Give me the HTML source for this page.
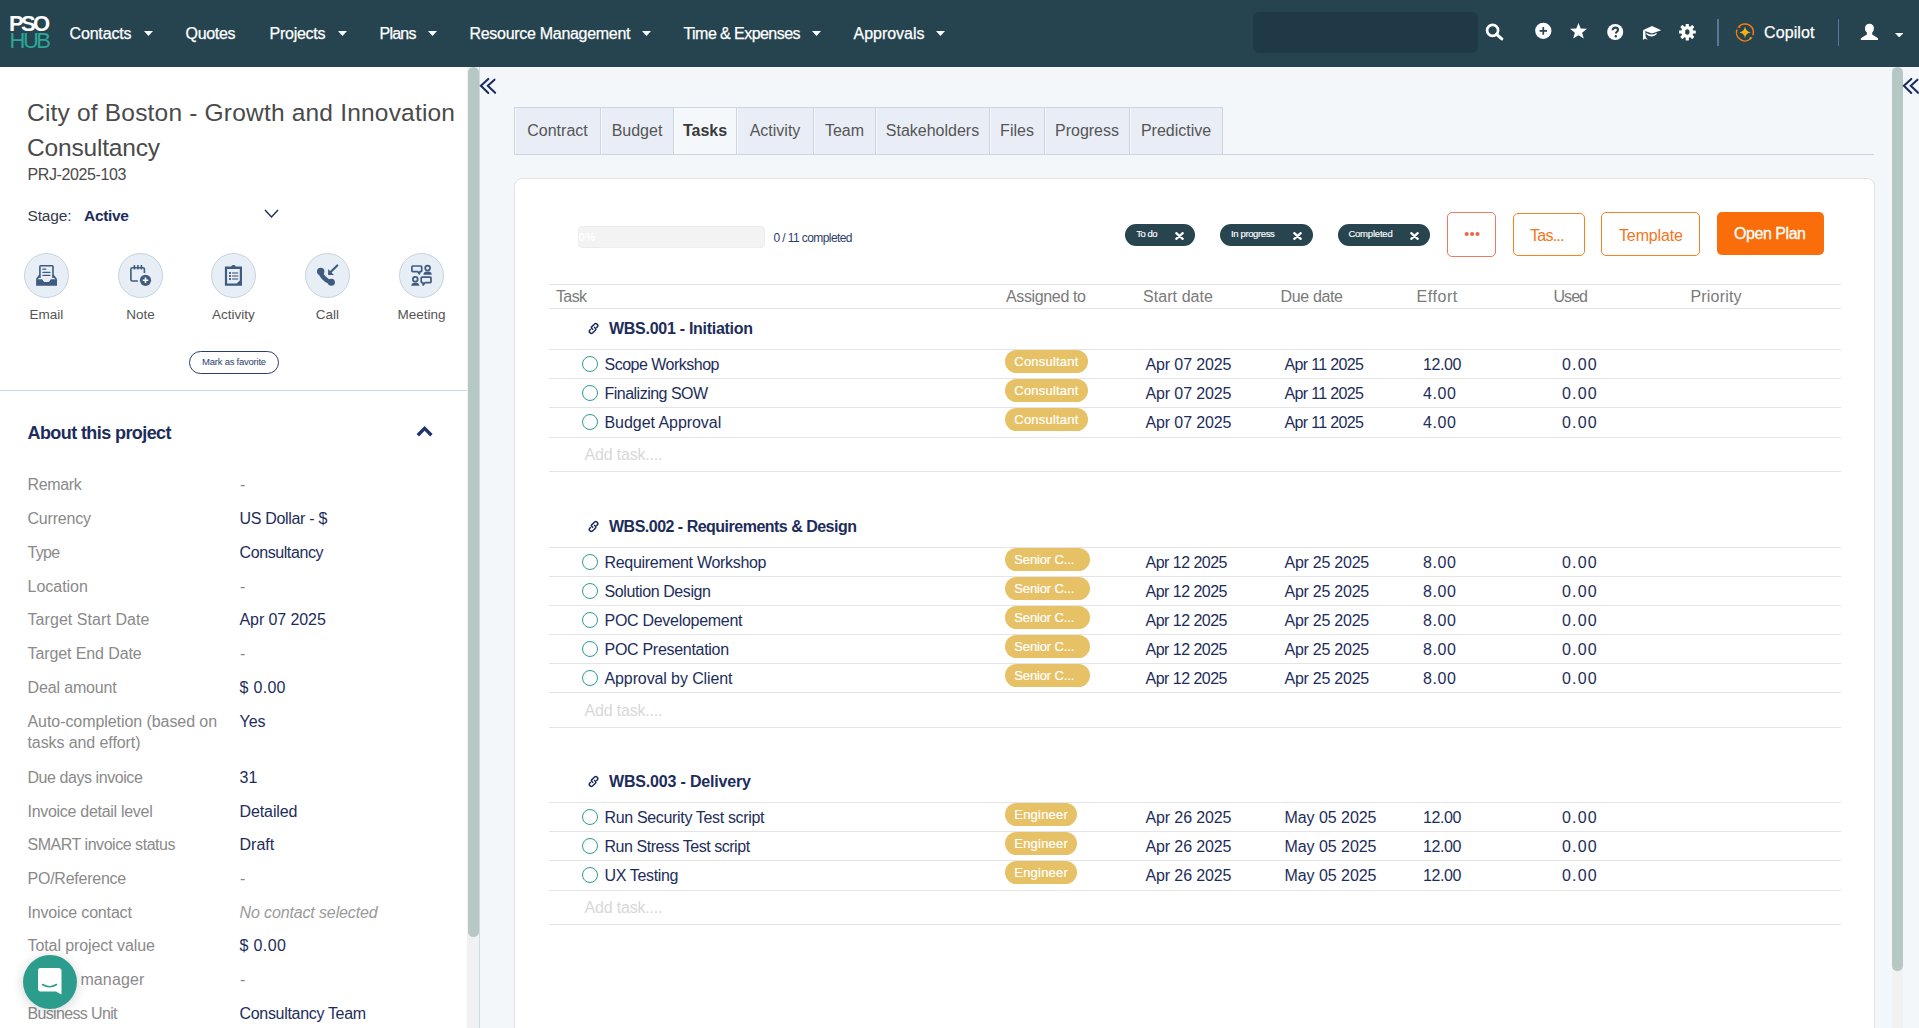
<!DOCTYPE html>
<html><head><meta charset="utf-8"><title>PSO Hub - Project</title>
<style>
html,body{margin:0;padding:0;width:1919px;height:1028px;overflow:hidden;background:#ffffff;font-family:"Liberation Sans", sans-serif;}
.t{position:absolute;white-space:pre;line-height:1;}
.r{position:absolute;box-sizing:border-box;display:block;}
</style></head><body>
<div class="r" style="left:0px;top:0px;width:1919px;height:67px;background:#264450;"></div>
<div class="t" style="left:9.00px;top:13.18px;font-size:22px;color:#fff;font-weight:700;letter-spacing:-2.734px;">PSO</div>
<div class="t" style="left:9.50px;top:29.88px;font-size:22px;color:#2aa797;letter-spacing:-2.477px;">HUB</div>
<div class="t" style="left:69.50px;top:25.96px;font-size:16px;color:#fff;letter-spacing:-0.163px;-webkit-text-stroke:0.25px #fff;">Contacts</div>
<svg class="r" style="left:144px;top:31px;" width="9" height="5" viewBox="0 0 9 5"><path d="M0 0H9L4.5 5Z" fill="#fff"/></svg>
<div class="t" style="left:185.50px;top:25.96px;font-size:16px;color:#fff;letter-spacing:-0.319px;-webkit-text-stroke:0.25px #fff;">Quotes</div>
<div class="t" style="left:269.50px;top:25.96px;font-size:16px;color:#fff;letter-spacing:-0.257px;-webkit-text-stroke:0.25px #fff;">Projects</div>
<svg class="r" style="left:337.5px;top:31px;" width="9" height="5" viewBox="0 0 9 5"><path d="M0 0H9L4.5 5Z" fill="#fff"/></svg>
<div class="t" style="left:379.50px;top:25.96px;font-size:16px;color:#fff;letter-spacing:-0.758px;-webkit-text-stroke:0.25px #fff;">Plans</div>
<svg class="r" style="left:428px;top:31px;" width="9" height="5" viewBox="0 0 9 5"><path d="M0 0H9L4.5 5Z" fill="#fff"/></svg>
<div class="t" style="left:469.50px;top:25.96px;font-size:16px;color:#fff;letter-spacing:-0.295px;-webkit-text-stroke:0.25px #fff;">Resource Management</div>
<svg class="r" style="left:641.5px;top:31px;" width="9" height="5" viewBox="0 0 9 5"><path d="M0 0H9L4.5 5Z" fill="#fff"/></svg>
<div class="t" style="left:683.50px;top:25.96px;font-size:16px;color:#fff;letter-spacing:-0.557px;-webkit-text-stroke:0.25px #fff;">Time &amp; Expenses</div>
<svg class="r" style="left:811.5px;top:31px;" width="9" height="5" viewBox="0 0 9 5"><path d="M0 0H9L4.5 5Z" fill="#fff"/></svg>
<div class="t" style="left:853.50px;top:25.96px;font-size:16px;color:#fff;letter-spacing:-0.02px;-webkit-text-stroke:0.25px #fff;">Approvals</div>
<svg class="r" style="left:935.5px;top:31px;" width="9" height="5" viewBox="0 0 9 5"><path d="M0 0H9L4.5 5Z" fill="#fff"/></svg>
<div class="r" style="left:1253px;top:12px;width:225px;height:41px;background:#1f3a46;border-radius:6px;"></div>
<svg class="r" style="left:1485px;top:23px;" width="20" height="18" viewBox="0 0 20 18"><circle cx="7.6" cy="7.4" r="5.5" fill="none" stroke="#fff" stroke-width="2.7"/><path d="M11.6 11.4L16.8 15.9" stroke="#fff" stroke-width="3" stroke-linecap="round"/></svg>
<svg class="r" style="left:1535px;top:22px;" width="17" height="18" viewBox="0 0 17 18"><circle cx="8.3" cy="8.8" r="8.1" fill="#fff"/><path d="M8.3 5.1V12.7M4.6 8.9H12" stroke="#264450" stroke-width="1.7"/></svg>
<svg class="r" style="left:1569px;top:23px;" width="19" height="16" viewBox="0 0 19 16"><path d="M9.5 0L11.7 5.5L18 5.8L13.1 9.7L14.8 15.6L9.5 12.2L4.2 15.6L5.9 9.7L1 5.8L7.3 5.5Z" fill="#fff"/></svg>
<svg class="r" style="left:1607px;top:24px;" width="17" height="16" viewBox="0 0 17 16"><circle cx="8.2" cy="8" r="8" fill="#fff"/><path d="M5.6 6.2C5.6 4.6 6.8 3.6 8.3 3.6C9.9 3.6 11 4.6 11 5.9C11 7.6 8.9 7.8 8.9 9.4" fill="none" stroke="#264450" stroke-width="2.1"/><circle cx="8.8" cy="12.2" r="1.2" fill="#264450"/></svg>
<svg class="r" style="left:1636px;top:18px;" width="30" height="28" viewBox="0 0 30 28"><path d="M6.8 12.2L16 7.9L25.2 12.3L16 15.6Z" fill="#fff"/><path d="M10.4 14.7Q16 18.4 20.6 14.7V16.3Q16 20.6 10.4 16.6Z" fill="#fff"/><path d="M7.1 12.3L9.4 13.6L9.6 18.4L11.6 21.9L9.1 20.5L6.9 22.1L7 18.4Z" fill="#fff"/></svg>
<svg class="r" style="left:1679px;top:24px;" width="17" height="17" viewBox="0 0 17 17"><g transform="translate(8.3 8)"><g fill="#fff"><rect x="-1.6" y="-8.5" width="3.2" height="4.5" rx="0.6" transform="rotate(0)"/><rect x="-1.6" y="-8.5" width="3.2" height="4.5" rx="0.6" transform="rotate(45)"/><rect x="-1.6" y="-8.5" width="3.2" height="4.5" rx="0.6" transform="rotate(90)"/><rect x="-1.6" y="-8.5" width="3.2" height="4.5" rx="0.6" transform="rotate(135)"/><rect x="-1.6" y="-8.5" width="3.2" height="4.5" rx="0.6" transform="rotate(180)"/><rect x="-1.6" y="-8.5" width="3.2" height="4.5" rx="0.6" transform="rotate(225)"/><rect x="-1.6" y="-8.5" width="3.2" height="4.5" rx="0.6" transform="rotate(270)"/><rect x="-1.6" y="-8.5" width="3.2" height="4.5" rx="0.6" transform="rotate(315)"/><circle r="6.1"/></g><ellipse rx="2.2" ry="2.8" fill="#264450"/></g></svg>
<div class="r" style="left:1717px;top:19px;width:2px;height:27px;background:#5b7699;"></div>
<div class="r" style="left:1838px;top:19px;width:1px;height:27px;background:#5b7699;"></div>
<svg class="r" style="left:1730px;top:18px;" width="30" height="28" viewBox="0 0 30 28"><defs><linearGradient id="cpg" x1="0" y1="0" x2="0" y2="1"><stop offset="0" stop-color="#fbc91c"/><stop offset="1" stop-color="#f49312"/></linearGradient></defs><g fill="none" stroke="#f57f10" stroke-width="1.5"><path d="M8.68 8.71A8.5 8.5 0 0 1 23.01 17.25"/><path d="M21.11 20.31A8.5 8.5 0 0 1 6.98 11.58"/></g><path d="M7 9.3L10.3 7.2L10.2 10Z" fill="#f57f10"/><path d="M22.8 19.8L19.5 21.7L19.8 19Z" fill="#f9a51a"/><path d="M15 8.6Q15.7 13.7 20.9 14.4Q15.7 15.1 15 20.2Q14.3 15.1 9.1 14.4Q14.3 13.7 15 8.6Z" fill="url(#cpg)"/></svg>
<div class="t" style="left:1764.00px;top:24.96px;font-size:16px;color:#fff;letter-spacing:0.115px;-webkit-text-stroke:0.25px #fff;">Copilot</div>
<svg class="r" style="left:1850px;top:16px;" width="30" height="28" viewBox="0 0 30 28"><rect x="15" y="7.7" width="8.9" height="9.6" rx="4.2" fill="#fff"/><path d="M16.9 15H22.2V18.4L28 22.3V24.1H10.8V22.3L16.9 18.4Z" fill="#fff"/></svg>
<svg class="r" style="left:1894.8px;top:33px;" width="8.4" height="4.4" viewBox="0 0 8.4 4.4"><path d="M0 0H8.4L4.2 4.4Z" fill="#fff"/></svg>
<div class="t" style="left:27.00px;top:100.56px;font-size:24.5px;color:#4a4a4a;letter-spacing:0.194px;">City of Boston - Growth and Innovation</div>
<div class="t" style="left:27.00px;top:135.56px;font-size:24.5px;color:#4a4a4a;letter-spacing:-0.183px;">Consultancy</div>
<div class="t" style="left:27.50px;top:167.36px;font-size:16px;color:#4a4a4a;letter-spacing:-0.379px;">PRJ-2025-103</div>
<div class="t" style="left:27.50px;top:207.88px;font-size:15.5px;color:#333a4a;letter-spacing:-0.163px;">Stage:</div>
<div class="t" style="left:84.00px;top:207.88px;font-size:15.5px;color:#1d2d5b;font-weight:700;letter-spacing:-0.306px;">Active</div>
<svg class="r" style="left:264px;top:209px;" width="15" height="10" viewBox="0 0 15 10"><path d="M1 1L7.5 8L14 1" fill="none" stroke="#1d2d5b" stroke-width="1.4"/></svg>
<div class="r" style="left:24.0px;top:253px;width:45px;height:45px;background:#e8eef6;border:1px solid #c5d3e0;border-radius:50%;"></div>
<div class="t" style="left:-453.50px;width:1000px;text-align:center;top:307.57px;font-size:13.5px;color:#555;">Email</div>
<div class="r" style="left:118.0px;top:253px;width:45px;height:45px;background:#e8eef6;border:1px solid #c5d3e0;border-radius:50%;"></div>
<div class="t" style="left:-359.50px;width:1000px;text-align:center;top:307.57px;font-size:13.5px;color:#555;">Note</div>
<div class="r" style="left:211.0px;top:253px;width:45px;height:45px;background:#e8eef6;border:1px solid #c5d3e0;border-radius:50%;"></div>
<div class="t" style="left:-266.50px;width:1000px;text-align:center;top:307.57px;font-size:13.5px;color:#555;">Activity</div>
<div class="r" style="left:305.0px;top:253px;width:45px;height:45px;background:#e8eef6;border:1px solid #c5d3e0;border-radius:50%;"></div>
<div class="t" style="left:-172.50px;width:1000px;text-align:center;top:307.57px;font-size:13.5px;color:#555;">Call</div>
<div class="r" style="left:399.0px;top:253px;width:45px;height:45px;background:#e8eef6;border:1px solid #c5d3e0;border-radius:50%;"></div>
<div class="t" style="left:-78.50px;width:1000px;text-align:center;top:307.57px;font-size:13.5px;color:#555;">Meeting</div>
<svg class="r" style="left:30px;top:258px;" width="34" height="34" viewBox="0 0 34 34"><path d="M9.9 20V8.6Q9.9 7.7 10.8 7.7H22.1Q23 7.7 23 8.6V20" fill="#e8eef6" stroke="#3f5b80" stroke-width="1.6"/><path d="M12.9 11.2H15.8M12.9 14.4H20M12.9 17.4H20" stroke="#3f5b80" stroke-width="1.2" stroke-linecap="round"/><path d="M9.9 17L6.6 21.4M23 17L26.4 21.4" stroke="#3f5b80" stroke-width="1.6"/><path d="M6.1 21.2H11.6Q12.4 21.2 12.8 22L13.3 23.1Q13.7 23.9 14.5 23.9H18.5Q19.3 23.9 19.7 23.1L20.2 22Q20.6 21.2 21.4 21.2H27V27.8H6.1Z" fill="#3f5b80"/></svg>
<svg class="r" style="left:124px;top:258px;" width="34" height="34" viewBox="0 0 34 34"><path d="M13.9 23H8.4Q6.9 23 6.9 21.5V11.3Q6.9 9.8 8.4 9.8H18.9Q20.4 9.8 20.4 11.3V14.9" fill="none" stroke="#3f5b80" stroke-width="1.6"/><path d="M10.4 7.1V11.6M13.9 7.1V11.6M17.4 7.1V11.6" stroke="#3f5b80" stroke-width="1.6"/><circle cx="21.5" cy="22.3" r="5.6" fill="#3f5b80"/><path d="M21.5 19.5V25.1M18.7 22.3H24.3" stroke="#fff" stroke-width="1.6"/></svg>
<svg class="r" style="left:217px;top:258px;" width="34" height="34" viewBox="0 0 34 34"><path d="M7.9 8.4H14.2Q14.8 7.1 16.5 7.1Q18.2 7.1 18.8 8.4H25V27.8H7.9Z" fill="#3f5b80"/><path d="M10.1 10.9H22.8V22.6L19.7 25.5H10.1Z" fill="#e8eef6"/><path d="M12.1 14.1H13.9V15.9H12.1ZM12.1 17.1H13.9V18.9H12.1ZM12.1 20.1H13.9V21.9H12.1Z" fill="#3f5b80"/><path d="M15.6 15H20.6M15.6 18H20.8M15.6 21H20.6" stroke="#3f5b80" stroke-opacity="0.75" stroke-width="1.5" stroke-linecap="round"/></svg>
<svg class="r" style="left:310px;top:258px;" width="34" height="34" viewBox="0 0 34 34"><path d="M10.3 13.6Q12 20.5 20.8 24.6" fill="none" stroke="#3f5b80" stroke-width="4.4"/><circle cx="10.7" cy="13.4" r="3.7" fill="#3f5b80"/><circle cx="21.4" cy="24.3" r="3.5" fill="#3f5b80"/><path d="M27.3 7.4L20.6 14.1" stroke="#3f5b80" stroke-width="2.1" stroke-linecap="round"/><path d="M18.1 11V16.9H24Z" fill="#3f5b80"/></svg>
<svg class="r" style="left:404px;top:258px;" width="34" height="34" viewBox="0 0 34 34"><path d="M8.8 8H16.8Q17.7 8 17.7 8.9V12.7Q17.7 13.6 16.8 13.6H15.8L15.4 15.9L13.6 13.6H8.8Q7.9 13.6 7.9 12.7V8.9Q7.9 8 8.8 8Z" fill="none" stroke="#3f5b80" stroke-width="1.7" stroke-linejoin="round"/><circle cx="23.6" cy="10.1" r="2.4" fill="none" stroke="#3f5b80" stroke-width="1.7"/><path d="M19.3 16.7Q19.6 13.9 22 13.6H25.2Q27.6 13.9 27.9 16.7Z" fill="#3f5b80"/><circle cx="11.3" cy="21.3" r="2.4" fill="none" stroke="#3f5b80" stroke-width="1.7"/><path d="M7.1 27.8Q7.4 25 9.8 24.7H12.8Q15.2 25 15.5 27.8Z" fill="#3f5b80"/><path d="M18.1 19.1H26.1Q27 19.1 27 20V23.8Q27 24.7 26.1 24.7H21L19.2 27L18.9 24.7H18.1Q17.2 24.7 17.2 23.8V20Q17.2 19.1 18.1 19.1Z" fill="none" stroke="#3f5b80" stroke-width="1.7" stroke-linejoin="round"/></svg>
<div class="r" style="left:189px;top:351px;width:90px;height:23px;background:#fff;border:1.3px solid #2b3d6e;border-radius:12px;"></div>
<div class="t" style="left:-266.00px;width:1000px;text-align:center;top:357.46px;font-size:9.5px;color:#2b3d6e;letter-spacing:-0.239px;padding-left:-0.239px;">Mark as favorite</div>
<div class="r" style="left:0px;top:390px;width:467px;height:1px;background:#cdd7e0;"></div>
<div class="t" style="left:27.50px;top:423.96px;font-size:18px;color:#1d2d5b;font-weight:700;letter-spacing:-0.588px;">About this project</div>
<svg class="r" style="left:405px;top:415px;" width="40" height="35" viewBox="0 0 40 35"><path d="M11.6 18.9L19.6 10.9L27.6 18.9L25.2 21.4L19.6 15.8L14 21.4Z" fill="#23346a"/></svg>
<div class="t" style="left:27.50px;top:477.06px;font-size:16px;color:#8a8a8a;letter-spacing:-0.363px;">Remark</div>
<div class="t" style="left:240.00px;top:477.06px;font-size:16px;color:#8a8a8a;">-</div>
<div class="t" style="left:27.50px;top:511.06px;font-size:16px;color:#8a8a8a;letter-spacing:-0.201px;">Currency</div>
<div class="t" style="left:239.50px;top:511.06px;font-size:16px;color:#1d2d5b;letter-spacing:-0.315px;">US Dollar - $</div>
<div class="t" style="left:27.50px;top:545.06px;font-size:16px;color:#8a8a8a;letter-spacing:-0.662px;">Type</div>
<div class="t" style="left:239.50px;top:545.06px;font-size:16px;color:#1d2d5b;letter-spacing:-0.405px;">Consultancy</div>
<div class="t" style="left:27.50px;top:578.76px;font-size:16px;color:#8a8a8a;letter-spacing:-0.014px;">Location</div>
<div class="t" style="left:240.00px;top:578.76px;font-size:16px;color:#8a8a8a;">-</div>
<div class="t" style="left:27.50px;top:611.96px;font-size:16px;color:#8a8a8a;letter-spacing:0.065px;">Target Start Date</div>
<div class="t" style="left:239.50px;top:611.96px;font-size:16px;color:#1d2d5b;letter-spacing:-0.089px;">Apr 07 2025</div>
<div class="t" style="left:27.50px;top:645.76px;font-size:16px;color:#8a8a8a;letter-spacing:-0.102px;">Target End Date</div>
<div class="t" style="left:240.00px;top:645.76px;font-size:16px;color:#8a8a8a;">-</div>
<div class="t" style="left:27.50px;top:679.56px;font-size:16px;color:#8a8a8a;letter-spacing:-0.142px;">Deal amount</div>
<div class="t" style="left:239.50px;top:679.56px;font-size:16px;color:#1d2d5b;letter-spacing:0.303px;">$ 0.00</div>
<div class="t" style="left:27.50px;top:713.76px;font-size:16px;color:#8a8a8a;letter-spacing:-0.068px;">Auto-completion (based on</div>
<div class="t" style="left:239.50px;top:713.76px;font-size:16px;color:#1d2d5b;">Yes</div>
<div class="t" style="left:27.50px;top:735.36px;font-size:16px;color:#8a8a8a;letter-spacing:-0.09px;">tasks and effort)</div>
<div class="t" style="left:27.50px;top:770.36px;font-size:16px;color:#8a8a8a;letter-spacing:-0.436px;">Due days invoice</div>
<div class="t" style="left:239.50px;top:770.36px;font-size:16px;color:#1d2d5b;">31</div>
<div class="t" style="left:27.50px;top:803.56px;font-size:16px;color:#8a8a8a;letter-spacing:-0.292px;">Invoice detail level</div>
<div class="t" style="left:239.50px;top:803.56px;font-size:16px;color:#1d2d5b;letter-spacing:-0.1px;">Detailed</div>
<div class="t" style="left:27.50px;top:837.16px;font-size:16px;color:#8a8a8a;letter-spacing:-0.464px;">SMART invoice status</div>
<div class="t" style="left:239.50px;top:837.16px;font-size:16px;color:#1d2d5b;">Draft</div>
<div class="t" style="left:27.50px;top:870.96px;font-size:16px;color:#8a8a8a;letter-spacing:-0.245px;">PO/Reference</div>
<div class="t" style="left:240.00px;top:870.96px;font-size:16px;color:#8a8a8a;">-</div>
<div class="t" style="left:27.50px;top:904.96px;font-size:16px;color:#8a8a8a;letter-spacing:-0.167px;">Invoice contact</div>
<div class="t" style="left:239.50px;top:904.96px;font-size:16px;color:#9a9a9a;letter-spacing:-0.13px;font-style:italic;">No contact selected</div>
<div class="t" style="left:27.50px;top:938.36px;font-size:16px;color:#8a8a8a;letter-spacing:-0.087px;">Total project value</div>
<div class="t" style="left:239.50px;top:938.36px;font-size:16px;color:#1d2d5b;letter-spacing:0.363px;">$ 0.00</div>
<div class="t" style="left:80.40px;top:971.96px;font-size:16px;color:#8a8a8a;letter-spacing:0.124px;">manager</div>
<div class="t" style="left:240.00px;top:971.96px;font-size:16px;color:#8a8a8a;">-</div>
<div class="t" style="left:27.50px;top:1005.76px;font-size:16px;color:#8a8a8a;letter-spacing:-0.652px;">Business Unit</div>
<div class="t" style="left:239.50px;top:1005.76px;font-size:16px;color:#1d2d5b;letter-spacing:-0.315px;">Consultancy Team</div>
<div class="r" style="left:23px;top:955px;width:54px;height:54px;background:#2c9c8c;border-radius:50%;box-shadow:0 2px 12px rgba(0,0,0,0.18);"></div>
<svg class="r" style="left:37px;top:967px;" width="26" height="29" viewBox="0 0 26 29"><path d="M3 1H21.5C23 1 24.5 2 24.5 3.5V27.5L19 24.5H3.5C2 24.5 1 23.5 1 22V3.5C1 2 2 1 3 1Z" fill="#fff"/><path d="M5.5 17.5Q12.5 22 19.5 17.5" fill="none" stroke="#2c9c8c" stroke-width="1.6" stroke-linecap="round"/></svg>
<div class="r" style="left:467px;top:67px;width:12px;height:961px;background:#f1f1f1;"></div>
<div class="r" style="left:468px;top:67px;width:11px;height:870px;background:#b6c8c4;border-radius:5.5px;"></div>
<div class="r" style="left:479px;top:67px;width:1px;height:961px;background:#d0dbe5;"></div>
<div class="r" style="left:480px;top:67px;width:1412px;height:961px;background:#f3f7fa;"></div>
<div class="r" style="left:1903px;top:67px;width:16px;height:961px;background:#f3f7fa;"></div>
<svg class="r" style="left:476px;top:72px;" width="26" height="28" viewBox="0 0 26 28"><path d="M12.3 6.9L4.9 13.8L12.3 20.9M18.5 7.7L11.8 13.8L19.1 20.8" fill="none" stroke="#1e2c62" stroke-width="2.1" stroke-linecap="round"/></svg>
<div class="r" style="left:1892px;top:67px;width:11px;height:961px;background:#f1f1f1;"></div>
<div class="r" style="left:1892px;top:67px;width:11px;height:904px;background:#b6c8c4;border-radius:5.5px;"></div>
<div class="r" style="left:514px;top:154px;width:1360px;height:1px;background:#c9d5e3;"></div>
<div class="r" style="left:514px;top:107px;width:87px;height:48px;background:#e9eef6;border:1px solid #cad6e2;box-shadow:inset 1px 0 0 rgba(255,255,255,0.6);"></div>
<div class="t" style="left:57.50px;width:1000px;text-align:center;top:123.16px;font-size:16px;color:#555;">Contract</div>
<div class="r" style="left:600px;top:107px;width:74px;height:48px;background:#e9eef6;border:1px solid #cad6e2;box-shadow:inset 1px 0 0 rgba(255,255,255,0.6);"></div>
<div class="t" style="left:137.00px;width:1000px;text-align:center;top:123.16px;font-size:16px;color:#555;">Budget</div>
<div class="r" style="left:673px;top:107px;width:64px;height:48px;background:#f4f8fb;border:1px solid #cad6e2;box-shadow:inset 1px 0 0 rgba(255,255,255,0.6);"></div>
<div class="t" style="left:205.00px;width:1000px;text-align:center;top:123.16px;font-size:16px;color:#3a3a3a;font-weight:700;">Tasks</div>
<div class="r" style="left:736px;top:107px;width:78px;height:48px;background:#e9eef6;border:1px solid #cad6e2;box-shadow:inset 1px 0 0 rgba(255,255,255,0.6);"></div>
<div class="t" style="left:275.00px;width:1000px;text-align:center;top:123.16px;font-size:16px;color:#555;">Activity</div>
<div class="r" style="left:813px;top:107px;width:63px;height:48px;background:#e9eef6;border:1px solid #cad6e2;box-shadow:inset 1px 0 0 rgba(255,255,255,0.6);"></div>
<div class="t" style="left:344.50px;width:1000px;text-align:center;top:123.16px;font-size:16px;color:#555;">Team</div>
<div class="r" style="left:875px;top:107px;width:115px;height:48px;background:#e9eef6;border:1px solid #cad6e2;box-shadow:inset 1px 0 0 rgba(255,255,255,0.6);"></div>
<div class="t" style="left:432.50px;width:1000px;text-align:center;top:123.16px;font-size:16px;color:#555;">Stakeholders</div>
<div class="r" style="left:989px;top:107px;width:56px;height:48px;background:#e9eef6;border:1px solid #cad6e2;box-shadow:inset 1px 0 0 rgba(255,255,255,0.6);"></div>
<div class="t" style="left:517.00px;width:1000px;text-align:center;top:123.16px;font-size:16px;color:#555;">Files</div>
<div class="r" style="left:1044px;top:107px;width:86px;height:48px;background:#e9eef6;border:1px solid #cad6e2;box-shadow:inset 1px 0 0 rgba(255,255,255,0.6);"></div>
<div class="t" style="left:587.00px;width:1000px;text-align:center;top:123.16px;font-size:16px;color:#555;">Progress</div>
<div class="r" style="left:1129px;top:107px;width:94px;height:48px;background:#e9eef6;border:1px solid #cad6e2;box-shadow:inset 1px 0 0 rgba(255,255,255,0.6);"></div>
<div class="t" style="left:676.00px;width:1000px;text-align:center;top:123.16px;font-size:16px;color:#555;">Predictive</div>
<div class="r" style="left:514px;top:178px;width:1361px;height:900px;background:#fff;border:1px solid #e3e3e3;border-radius:8px;"></div>
<svg class="r" style="left:1898.7px;top:72px;overflow:visible;" width="26" height="28" viewBox="0 0 26 28"><path d="M12.3 6.9L4.9 13.8L12.3 20.9M18.5 7.7L11.8 13.8L19.1 20.8" fill="none" stroke="#1e2c62" stroke-width="2.1" stroke-linecap="round"/></svg>
<div class="r" style="left:578px;top:226px;width:187px;height:22px;background:#f3f3f3;border:1px solid #ececec;border-radius:4px;"></div>
<div class="t" style="left:578.50px;top:232.07px;font-size:11.5px;color:#fff;font-weight:700;">0%</div>
<div class="t" style="left:773.50px;top:232.34px;font-size:12px;color:#2d3d6a;letter-spacing:-0.59px;">0 / 11 completed</div>
<div class="r" style="left:1125px;top:224px;width:70px;height:22px;background:#27444f;border-radius:11px;"></div>
<div class="t" style="left:1136.30px;top:229.26px;font-size:9.5px;color:#fff;letter-spacing:-0.512px;-webkit-text-stroke:0.15px #fff;">To do</div>
<svg class="r" style="left:1174.7px;top:232px;" width="9" height="8" viewBox="0 0 9 8"><path d="M1.3 1.2L7.7 6.8M7.7 1.2L1.3 6.8" stroke="#fff" stroke-width="2.3" stroke-linecap="round"/></svg>
<div class="r" style="left:1220px;top:224px;width:93px;height:22px;background:#27444f;border-radius:11px;"></div>
<div class="t" style="left:1231.10px;top:229.26px;font-size:9.5px;color:#fff;letter-spacing:-0.383px;-webkit-text-stroke:0.15px #fff;">In progress</div>
<svg class="r" style="left:1292.5px;top:232px;" width="9" height="8" viewBox="0 0 9 8"><path d="M1.3 1.2L7.7 6.8M7.7 1.2L1.3 6.8" stroke="#fff" stroke-width="2.3" stroke-linecap="round"/></svg>
<div class="r" style="left:1338px;top:224px;width:92px;height:22px;background:#27444f;border-radius:11px;"></div>
<div class="t" style="left:1348.40px;top:229.26px;font-size:9.5px;color:#fff;letter-spacing:-0.207px;-webkit-text-stroke:0.15px #fff;">Completed</div>
<svg class="r" style="left:1409.8px;top:232px;" width="9" height="8" viewBox="0 0 9 8"><path d="M1.3 1.2L7.7 6.8M7.7 1.2L1.3 6.8" stroke="#fff" stroke-width="2.3" stroke-linecap="round"/></svg>
<div class="r" style="left:1447px;top:212px;width:49px;height:45px;background:#fff;border:1.3px solid #ea7a62;border-radius:5px;"></div>
<svg class="r" style="left:1464px;top:231px;" width="17" height="6" viewBox="0 0 17 6"><circle cx="2.7" cy="3" r="2.1" fill="#e5684f"/><circle cx="8.1" cy="3" r="2.1" fill="#e5684f"/><circle cx="13.5" cy="3" r="2.1" fill="#e5684f"/></svg>
<div class="r" style="left:1513px;top:213px;width:72px;height:43px;background:#fff;border:1.3px solid #f7801f;border-radius:5px;"></div>
<div class="t" style="left:1530.00px;top:227.76px;font-size:16px;color:#f47420;letter-spacing:-0.747px;">Tas...</div>
<div class="r" style="left:1601px;top:212px;width:99px;height:44px;background:#fff;border:1.3px solid #f7801f;border-radius:5px;"></div>
<div class="t" style="left:1619.00px;top:227.76px;font-size:16px;color:#f47420;letter-spacing:-0.132px;">Template</div>
<div class="r" style="left:1717px;top:212px;width:107px;height:43px;background:#f96d0a;border-radius:5px;"></div>
<div class="t" style="left:1734.00px;top:225.96px;font-size:16px;color:#fff;letter-spacing:-0.451px;-webkit-text-stroke:0.3px #fff;">Open Plan</div>
<div class="r" style="left:549px;top:284px;width:1292px;height:1px;background:#e4e4e4;"></div>
<div class="r" style="left:549px;top:308px;width:1292px;height:1px;background:#e4e4e4;"></div>
<div class="t" style="left:556.00px;top:288.76px;font-size:16px;color:#7a7a7a;letter-spacing:-0.635px;">Task</div>
<div class="t" style="left:1006.00px;top:288.76px;font-size:16px;color:#7a7a7a;letter-spacing:-0.361px;">Assigned to</div>
<div class="t" style="left:1143.00px;top:288.76px;font-size:16px;color:#7a7a7a;letter-spacing:0.069px;">Start date</div>
<div class="t" style="left:1280.50px;top:288.76px;font-size:16px;color:#7a7a7a;letter-spacing:-0.348px;">Due date</div>
<div class="t" style="left:1416.50px;top:288.76px;font-size:16px;color:#7a7a7a;letter-spacing:0.569px;">Effort</div>
<div class="t" style="left:1553.50px;top:288.76px;font-size:16px;color:#7a7a7a;letter-spacing:-0.953px;">Used</div>
<div class="t" style="left:1690.50px;top:288.76px;font-size:16px;color:#7a7a7a;letter-spacing:0.174px;">Priority</div>
<svg class="r" style="left:582px;top:316px;" width="30" height="24" viewBox="0 0 30 24"><g transform="translate(11.55 12.5) rotate(-45)" fill="none" stroke="#1d2d5b" stroke-width="1.5"><path d="M2.4 1.5H3.6A2 2 0 0 0 3.6 -2.5H-0.2Q-1.2 -2.5 -1.2 -1.5V0.6"/><path d="M-2.4 -1.5H-3.6A2 2 0 0 0 -3.6 2.5H0.4Q1.4 2.5 1.4 1.5V-0.6"/></g></svg>
<div class="t" style="left:609.00px;top:321.16px;font-size:16px;color:#1d2d5b;font-weight:700;letter-spacing:-0.281px;">WBS.001 - Initiation</div>
<div class="r" style="left:549px;top:349px;width:1292px;height:1px;background:#e4e4e4;"></div>
<div class="r" style="left:549px;top:378px;width:1292px;height:1px;background:#e4e4e4;"></div>
<div class="r" style="left:549px;top:407px;width:1292px;height:1px;background:#e4e4e4;"></div>
<div class="r" style="left:549px;top:437px;width:1292px;height:1px;background:#e4e4e4;"></div>
<div class="r" style="left:549px;top:471px;width:1292px;height:1px;background:#e4e4e4;"></div>
<div class="r" style="left:582px;top:356px;width:16px;height:16px;background:transparent;border:1.5px solid #2a9d8f;border-radius:50%;"></div>
<div class="t" style="left:604.50px;top:356.76px;font-size:16px;color:#1d2d5b;letter-spacing:-0.504px;">Scope Workshop</div>
<div class="r" style="left:1005px;top:350px;width:83px;height:23px;background:#e6c166;border-radius:11.5px;"></div>
<div class="t" style="left:1014.30px;top:354.50px;font-size:13px;color:#fff;letter-spacing:0.205px;-webkit-text-stroke:0.2px #fff;">Consultant</div>
<div class="t" style="left:1145.50px;top:356.76px;font-size:16px;color:#1d2d5b;letter-spacing:-0.119px;">Apr 07 2025</div>
<div class="t" style="left:1284.50px;top:356.76px;font-size:16px;color:#1d2d5b;letter-spacing:-0.67px;">Apr 11 2025</div>
<div class="t" style="left:1423.00px;top:356.76px;font-size:16px;color:#1d2d5b;letter-spacing:-0.387px;">12.00</div>
<div class="t" style="left:1562.00px;top:356.76px;font-size:16px;color:#1d2d5b;letter-spacing:1.153px;">0.00</div>
<div class="r" style="left:582px;top:385px;width:16px;height:16px;background:transparent;border:1.5px solid #2a9d8f;border-radius:50%;"></div>
<div class="t" style="left:604.50px;top:385.76px;font-size:16px;color:#1d2d5b;letter-spacing:-0.512px;">Finalizing SOW</div>
<div class="r" style="left:1005px;top:379px;width:83px;height:23px;background:#e6c166;border-radius:11.5px;"></div>
<div class="t" style="left:1014.30px;top:383.50px;font-size:13px;color:#fff;letter-spacing:0.205px;-webkit-text-stroke:0.2px #fff;">Consultant</div>
<div class="t" style="left:1145.50px;top:385.76px;font-size:16px;color:#1d2d5b;letter-spacing:-0.119px;">Apr 07 2025</div>
<div class="t" style="left:1284.50px;top:385.76px;font-size:16px;color:#1d2d5b;letter-spacing:-0.67px;">Apr 11 2025</div>
<div class="t" style="left:1423.00px;top:385.76px;font-size:16px;color:#1d2d5b;letter-spacing:0.62px;">4.00</div>
<div class="t" style="left:1562.00px;top:385.76px;font-size:16px;color:#1d2d5b;letter-spacing:1.153px;">0.00</div>
<div class="r" style="left:582px;top:414px;width:16px;height:16px;background:transparent;border:1.5px solid #2a9d8f;border-radius:50%;"></div>
<div class="t" style="left:604.50px;top:414.76px;font-size:16px;color:#1d2d5b;letter-spacing:-0.052px;">Budget Approval</div>
<div class="r" style="left:1005px;top:408px;width:83px;height:23px;background:#e6c166;border-radius:11.5px;"></div>
<div class="t" style="left:1014.30px;top:412.50px;font-size:13px;color:#fff;letter-spacing:0.205px;-webkit-text-stroke:0.2px #fff;">Consultant</div>
<div class="t" style="left:1145.50px;top:414.76px;font-size:16px;color:#1d2d5b;letter-spacing:-0.119px;">Apr 07 2025</div>
<div class="t" style="left:1284.50px;top:414.76px;font-size:16px;color:#1d2d5b;letter-spacing:-0.67px;">Apr 11 2025</div>
<div class="t" style="left:1423.00px;top:414.76px;font-size:16px;color:#1d2d5b;letter-spacing:0.62px;">4.00</div>
<div class="t" style="left:1562.00px;top:414.76px;font-size:16px;color:#1d2d5b;letter-spacing:1.153px;">0.00</div>
<div class="t" style="left:584.50px;top:447.26px;font-size:16px;color:#d8d8d8;letter-spacing:-0.186px;">Add task....</div>
<svg class="r" style="left:582px;top:514px;" width="30" height="24" viewBox="0 0 30 24"><g transform="translate(11.55 12.5) rotate(-45)" fill="none" stroke="#1d2d5b" stroke-width="1.5"><path d="M2.4 1.5H3.6A2 2 0 0 0 3.6 -2.5H-0.2Q-1.2 -2.5 -1.2 -1.5V0.6"/><path d="M-2.4 -1.5H-3.6A2 2 0 0 0 -3.6 2.5H0.4Q1.4 2.5 1.4 1.5V-0.6"/></g></svg>
<div class="t" style="left:609.00px;top:519.16px;font-size:16px;color:#1d2d5b;font-weight:700;letter-spacing:-0.506px;">WBS.002 - Requirements &amp; Design</div>
<div class="r" style="left:549px;top:547px;width:1292px;height:1px;background:#e4e4e4;"></div>
<div class="r" style="left:549px;top:576px;width:1292px;height:1px;background:#e4e4e4;"></div>
<div class="r" style="left:549px;top:605px;width:1292px;height:1px;background:#e4e4e4;"></div>
<div class="r" style="left:549px;top:634px;width:1292px;height:1px;background:#e4e4e4;"></div>
<div class="r" style="left:549px;top:663px;width:1292px;height:1px;background:#e4e4e4;"></div>
<div class="r" style="left:549px;top:692px;width:1292px;height:1px;background:#e4e4e4;"></div>
<div class="r" style="left:549px;top:727px;width:1292px;height:1px;background:#e4e4e4;"></div>
<div class="r" style="left:582px;top:554px;width:16px;height:16px;background:transparent;border:1.5px solid #2a9d8f;border-radius:50%;"></div>
<div class="t" style="left:604.50px;top:554.76px;font-size:16px;color:#1d2d5b;letter-spacing:-0.304px;">Requirement Workshop</div>
<div class="r" style="left:1005px;top:548px;width:85px;height:23px;background:#e6c166;border-radius:11.5px;"></div>
<div class="t" style="left:1014.30px;top:552.50px;font-size:13px;color:#fff;letter-spacing:-0.142px;-webkit-text-stroke:0.2px #fff;">Senior C...</div>
<div class="t" style="left:1145.50px;top:554.76px;font-size:16px;color:#1d2d5b;letter-spacing:-0.519px;">Apr 12 2025</div>
<div class="t" style="left:1284.50px;top:554.76px;font-size:16px;color:#1d2d5b;letter-spacing:-0.249px;">Apr 25 2025</div>
<div class="t" style="left:1423.00px;top:554.76px;font-size:16px;color:#1d2d5b;letter-spacing:0.62px;">8.00</div>
<div class="t" style="left:1562.00px;top:554.76px;font-size:16px;color:#1d2d5b;letter-spacing:1.153px;">0.00</div>
<div class="r" style="left:582px;top:583px;width:16px;height:16px;background:transparent;border:1.5px solid #2a9d8f;border-radius:50%;"></div>
<div class="t" style="left:604.50px;top:583.76px;font-size:16px;color:#1d2d5b;letter-spacing:-0.398px;">Solution Design</div>
<div class="r" style="left:1005px;top:577px;width:85px;height:23px;background:#e6c166;border-radius:11.5px;"></div>
<div class="t" style="left:1014.30px;top:581.50px;font-size:13px;color:#fff;letter-spacing:-0.142px;-webkit-text-stroke:0.2px #fff;">Senior C...</div>
<div class="t" style="left:1145.50px;top:583.76px;font-size:16px;color:#1d2d5b;letter-spacing:-0.519px;">Apr 12 2025</div>
<div class="t" style="left:1284.50px;top:583.76px;font-size:16px;color:#1d2d5b;letter-spacing:-0.249px;">Apr 25 2025</div>
<div class="t" style="left:1423.00px;top:583.76px;font-size:16px;color:#1d2d5b;letter-spacing:0.62px;">8.00</div>
<div class="t" style="left:1562.00px;top:583.76px;font-size:16px;color:#1d2d5b;letter-spacing:1.153px;">0.00</div>
<div class="r" style="left:582px;top:612px;width:16px;height:16px;background:transparent;border:1.5px solid #2a9d8f;border-radius:50%;"></div>
<div class="t" style="left:604.50px;top:612.76px;font-size:16px;color:#1d2d5b;letter-spacing:-0.286px;">POC Developement</div>
<div class="r" style="left:1005px;top:606px;width:85px;height:23px;background:#e6c166;border-radius:11.5px;"></div>
<div class="t" style="left:1014.30px;top:610.50px;font-size:13px;color:#fff;letter-spacing:-0.142px;-webkit-text-stroke:0.2px #fff;">Senior C...</div>
<div class="t" style="left:1145.50px;top:612.76px;font-size:16px;color:#1d2d5b;letter-spacing:-0.519px;">Apr 12 2025</div>
<div class="t" style="left:1284.50px;top:612.76px;font-size:16px;color:#1d2d5b;letter-spacing:-0.249px;">Apr 25 2025</div>
<div class="t" style="left:1423.00px;top:612.76px;font-size:16px;color:#1d2d5b;letter-spacing:0.62px;">8.00</div>
<div class="t" style="left:1562.00px;top:612.76px;font-size:16px;color:#1d2d5b;letter-spacing:1.153px;">0.00</div>
<div class="r" style="left:582px;top:641px;width:16px;height:16px;background:transparent;border:1.5px solid #2a9d8f;border-radius:50%;"></div>
<div class="t" style="left:604.50px;top:641.76px;font-size:16px;color:#1d2d5b;letter-spacing:-0.29px;">POC Presentation</div>
<div class="r" style="left:1005px;top:635px;width:85px;height:23px;background:#e6c166;border-radius:11.5px;"></div>
<div class="t" style="left:1014.30px;top:639.50px;font-size:13px;color:#fff;letter-spacing:-0.142px;-webkit-text-stroke:0.2px #fff;">Senior C...</div>
<div class="t" style="left:1145.50px;top:641.76px;font-size:16px;color:#1d2d5b;letter-spacing:-0.519px;">Apr 12 2025</div>
<div class="t" style="left:1284.50px;top:641.76px;font-size:16px;color:#1d2d5b;letter-spacing:-0.249px;">Apr 25 2025</div>
<div class="t" style="left:1423.00px;top:641.76px;font-size:16px;color:#1d2d5b;letter-spacing:0.62px;">8.00</div>
<div class="t" style="left:1562.00px;top:641.76px;font-size:16px;color:#1d2d5b;letter-spacing:1.153px;">0.00</div>
<div class="r" style="left:582px;top:670px;width:16px;height:16px;background:transparent;border:1.5px solid #2a9d8f;border-radius:50%;"></div>
<div class="t" style="left:604.50px;top:670.76px;font-size:16px;color:#1d2d5b;letter-spacing:-0.108px;">Approval by Client</div>
<div class="r" style="left:1005px;top:664px;width:85px;height:23px;background:#e6c166;border-radius:11.5px;"></div>
<div class="t" style="left:1014.30px;top:668.50px;font-size:13px;color:#fff;letter-spacing:-0.142px;-webkit-text-stroke:0.2px #fff;">Senior C...</div>
<div class="t" style="left:1145.50px;top:670.76px;font-size:16px;color:#1d2d5b;letter-spacing:-0.519px;">Apr 12 2025</div>
<div class="t" style="left:1284.50px;top:670.76px;font-size:16px;color:#1d2d5b;letter-spacing:-0.249px;">Apr 25 2025</div>
<div class="t" style="left:1423.00px;top:670.76px;font-size:16px;color:#1d2d5b;letter-spacing:0.62px;">8.00</div>
<div class="t" style="left:1562.00px;top:670.76px;font-size:16px;color:#1d2d5b;letter-spacing:1.153px;">0.00</div>
<div class="t" style="left:584.50px;top:703.26px;font-size:16px;color:#d8d8d8;letter-spacing:-0.186px;">Add task....</div>
<svg class="r" style="left:582px;top:769px;" width="30" height="24" viewBox="0 0 30 24"><g transform="translate(11.55 12.5) rotate(-45)" fill="none" stroke="#1d2d5b" stroke-width="1.5"><path d="M2.4 1.5H3.6A2 2 0 0 0 3.6 -2.5H-0.2Q-1.2 -2.5 -1.2 -1.5V0.6"/><path d="M-2.4 -1.5H-3.6A2 2 0 0 0 -3.6 2.5H0.4Q1.4 2.5 1.4 1.5V-0.6"/></g></svg>
<div class="t" style="left:609.00px;top:774.16px;font-size:16px;color:#1d2d5b;font-weight:700;letter-spacing:-0.174px;">WBS.003 - Delivery</div>
<div class="r" style="left:549px;top:802px;width:1292px;height:1px;background:#e4e4e4;"></div>
<div class="r" style="left:549px;top:831px;width:1292px;height:1px;background:#e4e4e4;"></div>
<div class="r" style="left:549px;top:860px;width:1292px;height:1px;background:#e4e4e4;"></div>
<div class="r" style="left:549px;top:890px;width:1292px;height:1px;background:#e4e4e4;"></div>
<div class="r" style="left:549px;top:924px;width:1292px;height:1px;background:#e4e4e4;"></div>
<div class="r" style="left:582px;top:809px;width:16px;height:16px;background:transparent;border:1.5px solid #2a9d8f;border-radius:50%;"></div>
<div class="t" style="left:604.50px;top:809.76px;font-size:16px;color:#1d2d5b;letter-spacing:-0.338px;">Run Security Test script</div>
<div class="r" style="left:1005px;top:803px;width:72px;height:23px;background:#e6c166;border-radius:11.5px;"></div>
<div class="t" style="left:1014.30px;top:807.50px;font-size:13px;color:#fff;letter-spacing:0.208px;-webkit-text-stroke:0.2px #fff;">Engineer</div>
<div class="t" style="left:1145.50px;top:809.76px;font-size:16px;color:#1d2d5b;letter-spacing:-0.119px;">Apr 26 2025</div>
<div class="t" style="left:1284.50px;top:809.76px;font-size:16px;color:#1d2d5b;letter-spacing:-0.052px;">May 05 2025</div>
<div class="t" style="left:1423.00px;top:809.76px;font-size:16px;color:#1d2d5b;letter-spacing:-0.387px;">12.00</div>
<div class="t" style="left:1562.00px;top:809.76px;font-size:16px;color:#1d2d5b;letter-spacing:1.153px;">0.00</div>
<div class="r" style="left:582px;top:838px;width:16px;height:16px;background:transparent;border:1.5px solid #2a9d8f;border-radius:50%;"></div>
<div class="t" style="left:604.50px;top:838.76px;font-size:16px;color:#1d2d5b;letter-spacing:-0.463px;">Run Stress Test script</div>
<div class="r" style="left:1005px;top:832px;width:72px;height:23px;background:#e6c166;border-radius:11.5px;"></div>
<div class="t" style="left:1014.30px;top:836.50px;font-size:13px;color:#fff;letter-spacing:0.208px;-webkit-text-stroke:0.2px #fff;">Engineer</div>
<div class="t" style="left:1145.50px;top:838.76px;font-size:16px;color:#1d2d5b;letter-spacing:-0.119px;">Apr 26 2025</div>
<div class="t" style="left:1284.50px;top:838.76px;font-size:16px;color:#1d2d5b;letter-spacing:-0.052px;">May 05 2025</div>
<div class="t" style="left:1423.00px;top:838.76px;font-size:16px;color:#1d2d5b;letter-spacing:-0.387px;">12.00</div>
<div class="t" style="left:1562.00px;top:838.76px;font-size:16px;color:#1d2d5b;letter-spacing:1.153px;">0.00</div>
<div class="r" style="left:582px;top:867px;width:16px;height:16px;background:transparent;border:1.5px solid #2a9d8f;border-radius:50%;"></div>
<div class="t" style="left:604.50px;top:867.76px;font-size:16px;color:#1d2d5b;letter-spacing:-0.342px;">UX Testing</div>
<div class="r" style="left:1005px;top:861px;width:72px;height:23px;background:#e6c166;border-radius:11.5px;"></div>
<div class="t" style="left:1014.30px;top:865.50px;font-size:13px;color:#fff;letter-spacing:0.208px;-webkit-text-stroke:0.2px #fff;">Engineer</div>
<div class="t" style="left:1145.50px;top:867.76px;font-size:16px;color:#1d2d5b;letter-spacing:-0.119px;">Apr 26 2025</div>
<div class="t" style="left:1284.50px;top:867.76px;font-size:16px;color:#1d2d5b;letter-spacing:-0.052px;">May 05 2025</div>
<div class="t" style="left:1423.00px;top:867.76px;font-size:16px;color:#1d2d5b;letter-spacing:-0.387px;">12.00</div>
<div class="t" style="left:1562.00px;top:867.76px;font-size:16px;color:#1d2d5b;letter-spacing:1.153px;">0.00</div>
<div class="t" style="left:584.50px;top:900.26px;font-size:16px;color:#d8d8d8;letter-spacing:-0.186px;">Add task....</div></body></html>
